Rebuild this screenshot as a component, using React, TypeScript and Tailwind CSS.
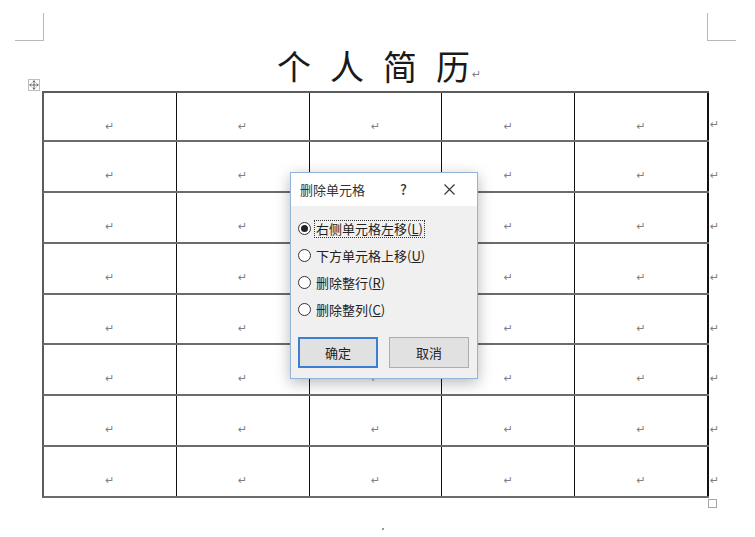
import { Move } from "lucide-react";

const FONT = { fontFamily: '"Noto Sans CJK SC", "Noto Sans", sans-serif' };
const ROWS = 8;
const COLS = 5;

function Mark({ className = "" }: { className?: string }) {
  return (
    <span
      className={`text-[11px] leading-none text-[#808080] ${className}`}
      style={{ fontFamily: '"DejaVu Sans", sans-serif' }}
    >
      ↵
    </span>
  );
}

function Radio({ checked, label, hot, focus }: { checked?: boolean; label: string; hot: string; focus?: boolean }) {
  return (
    <div className="flex h-[27px] items-center">
      <span className="flex h-[13px] w-[13px] items-center justify-center rounded-full border border-[#333] bg-white">
        {checked && <span className="h-[7px] w-[7px] rounded-full bg-[#222]" />}
      </span>
      <span
        className={`ml-[4px] px-[1px] text-[13px] leading-[16px] text-[#222] ${
          focus ? "outline outline-1 outline-dotted outline-[#333]" : ""
        }`}
      >
        {label}(<span className="underline">{hot}</span>)
      </span>
    </div>
  );
}

function Dialog() {
  return (
    <div
      className="absolute left-[290px] top-[172px] flex h-[207px] w-[188px] flex-col border border-[#93b4da] bg-[#f0f0f0] shadow-[0_4px_14px_rgba(0,0,0,0.28)]"
      style={FONT}
    >
      <div className="flex h-[33px] items-center bg-white pl-[9px] text-[13px] text-[#333]">
        <span>删除单元格</span>
        <span className="ml-[35px] text-[14px] font-medium">?</span>
        <svg className="ml-[37px]" width="11" height="11" viewBox="0 0 11 11">
          <path d="M0.5 0.5 L10.5 10.5 M10.5 0.5 L0.5 10.5" stroke="#333" strokeWidth="1.1" />
        </svg>
      </div>
      <div className="flex flex-1 flex-col px-[7px] pt-[9px]">
        <Radio checked focus label="右侧单元格左移" hot="L" />
        <Radio label="下方单元格上移" hot="U" />
        <Radio label="删除整行" hot="R" />
        <Radio label="删除整列" hot="C" />
        <div className="mt-[14px] flex gap-[11px]">
          <button className="h-[31px] w-[80px] border-2 border-[#3b7fd2] bg-[#e1e1e1] text-[13px] text-[#222]">
            确定
          </button>
          <button className="h-[31px] w-[80px] border border-[#adadad] bg-[#e1e1e1] text-[13px] text-[#222]">
            取消
          </button>
        </div>
      </div>
    </div>
  );
}

export default function App() {
  return (
    <div className="relative h-[537px] w-[755px] overflow-hidden bg-white pt-[13px]" style={FONT}>
      <div className="flex justify-between pl-[15px] pr-[19px]">
        <div className="h-[28px] w-[29px] border-b border-r border-[#b8b8b8]" />
        <div className="h-[28px] w-[29px] border-b border-l border-[#b8b8b8]" />
      </div>

      <div className="ml-[42px] flex h-[50px] w-[666px] items-center justify-center">
        <div className="flex items-end gap-[19px] pl-[8px] text-[34px] leading-none text-[#1a1a1a]">
          <span>个</span>
          <span>人</span>
          <span>简</span>
          <span className="flex items-end">
            历
            <Mark className="mb-[3px] ml-[2px]" />
          </span>
        </div>
      </div>

      <div className="relative ml-[42px] flex flex-col">
        <div className="absolute -left-[14px] -top-[12px] flex h-[12px] w-[12px] items-center justify-center border border-[#bcbcbc] bg-white">
          <Move size={10} strokeWidth={1.6} color="#333" />
        </div>
        {Array.from({ length: ROWS }).map((_, r) => (
          <div key={r} className="flex h-[50.9px]">
            <div
              className={`flex w-[667px] border-b-2 border-l-2 border-b-[#6c6c6c] border-l-[#5c5c5c] ${
                r === 0 ? "border-t-2 border-t-[#5c5c5c]" : ""
              }`}
            >
              {Array.from({ length: COLS }).map((_, c) => (
                <div
                  key={c}
                  className={`flex flex-1 justify-center pt-[28px] ${
                    c === COLS - 1 ? "border-r-2 border-r-[#111]" : "border-r border-r-[#111]"
                  }`}
                >
                  <Mark />
                </div>
              ))}
            </div>
            <div className="ml-[1px] flex pt-[28px]">
              <Mark />
            </div>
          </div>
        ))}
        <div className="ml-[666px] mt-[1px] h-[9px] w-[9px] border border-[#a8a8a8]" />
        <div className="ml-[340px] mt-[20px] h-[2px] w-[2px] bg-[#9a9a9a]" />
      </div>

      <Dialog />
    </div>
  );
}
